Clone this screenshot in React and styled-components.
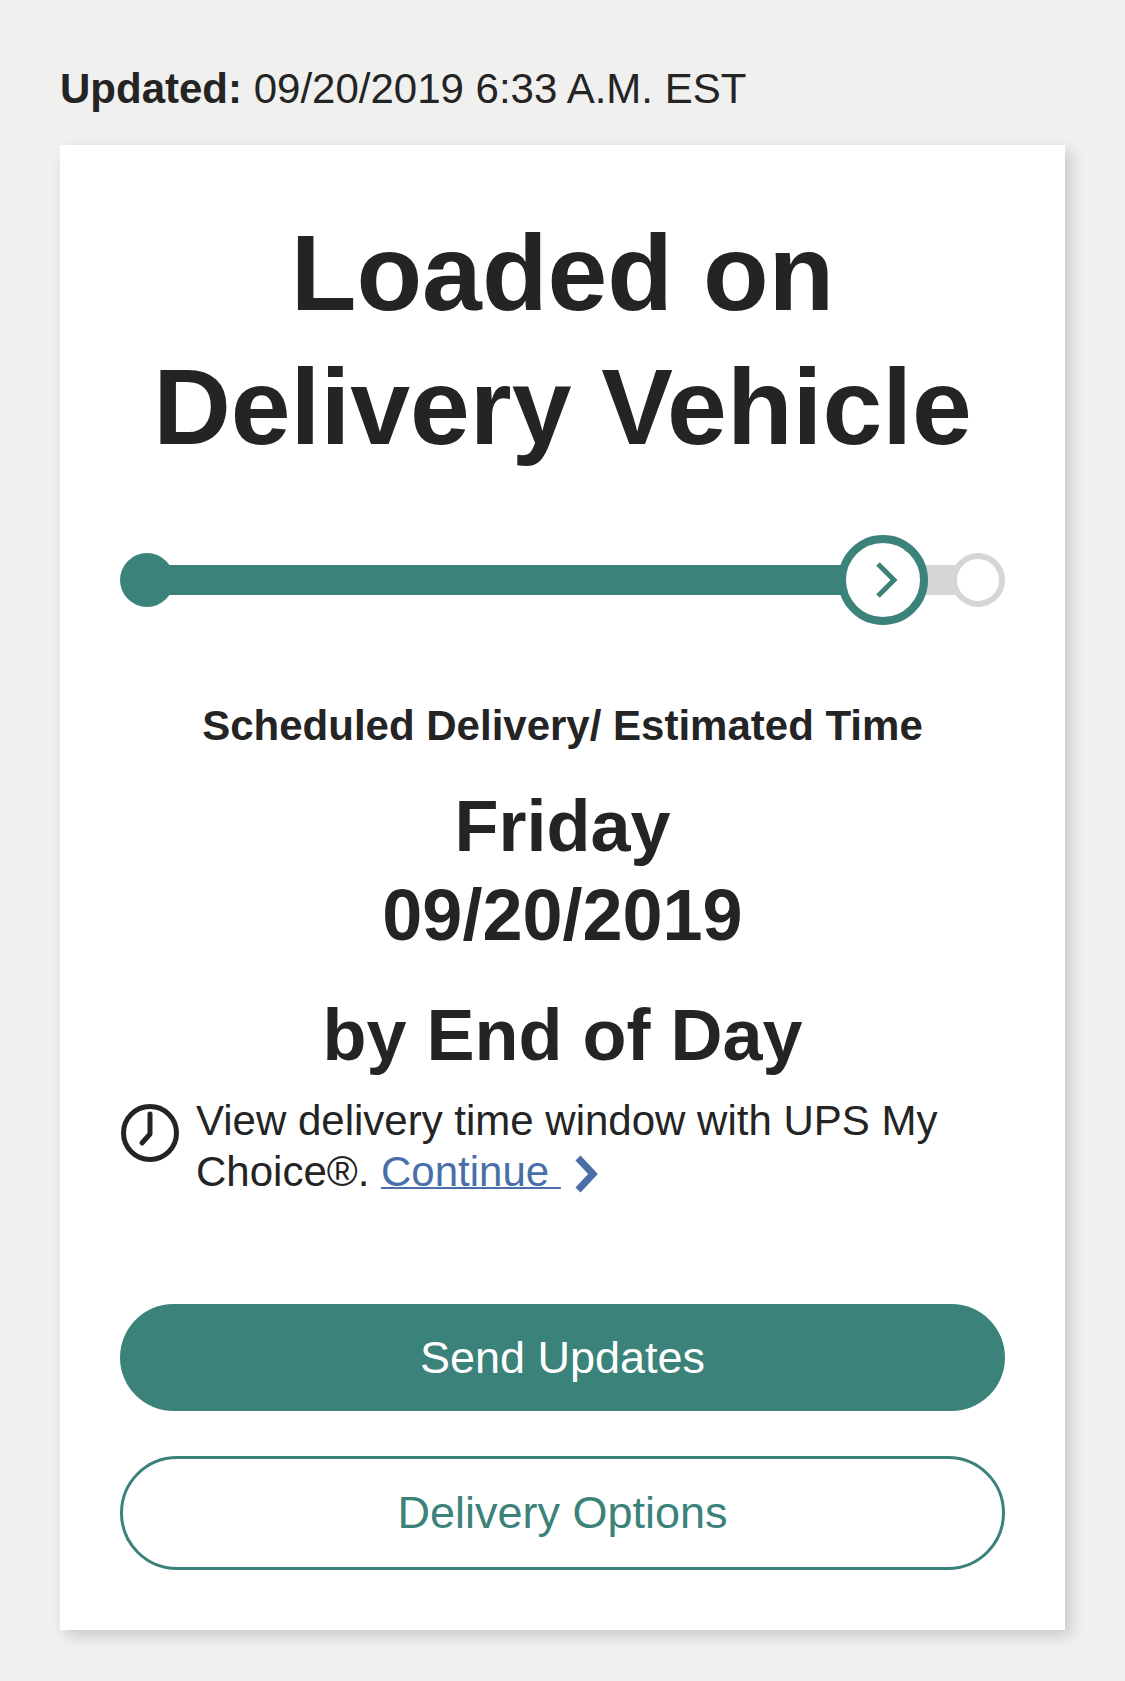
import React from 'react';
import styled, { createGlobalStyle } from 'styled-components';

const GlobalStyle = createGlobalStyle`
  html, body {
    margin: 0;
    padding: 0;
    background: #f0f0ef;
    font-family: "Liberation Sans", Arial, sans-serif;
    color: #242424;
  }
`;

const Page = styled.div`
  width: 1125px;
  height: 1681px;
  padding: 64px 60px 0;
  box-sizing: border-box;
  overflow: hidden;
`;

const Updated = styled.p`
  margin: 0 0 32px;
  font-size: 42px;
  line-height: 49px;
  white-space: nowrap;
  strong { font-weight: 700; }
`;

const Card = styled.section`
  width: 1005px;
  height: 1485px;
  box-sizing: border-box;
  padding: 61px 60px 0;
  background: #fff;
  box-shadow: 6px 6px 14px rgba(0, 0, 0, 0.16);
`;

const Title = styled.h1`
  margin: 0 0 61px;
  font-size: 107.5px;
  line-height: 134px;
  font-weight: 700;
  text-align: center;
`;

const Progress = styled.div`
  position: relative;
  height: 90px;
  display: flex;
  align-items: center;
  justify-content: space-between;
`;

const Track = styled.div`
  position: absolute;
  left: 27px;
  right: 27px;
  top: 30px;
  height: 30px;
  background: #d6d6d6;
`;

const TrackFill = styled.div`
  height: 100%;
  background: #3b827a;
`;

const StartDot = styled.span`
  position: relative;
  width: 54px;
  height: 54px;
  border-radius: 50%;
  background: #3b827a;
`;

const CurrentDot = styled.span`
  position: absolute;
  left: 718px;
  top: 0;
  width: 90px;
  height: 90px;
  box-sizing: border-box;
  border: 8px solid #3b827a;
  border-radius: 50%;
  background: #fff;
  display: flex;
  align-items: center;
  justify-content: center;
`;

const EndDot = styled.span`
  position: relative;
  width: 54px;
  height: 54px;
  box-sizing: border-box;
  border: 6px solid #d6d6d6;
  border-radius: 50%;
  background: #fff;
`;

const ScheduleLabel = styled.h2`
  margin: 76px 0 0;
  font-size: 42px;
  line-height: 50px;
  font-weight: 700;
  text-align: center;
`;

const DateBlock = styled.div`
  margin-top: 31px;
  font-size: 72px;
  line-height: 89px;
  font-weight: 700;
  text-align: center;
`;

const ByTime = styled.div`
  margin-top: 31px;
  font-size: 72px;
  line-height: 89px;
  font-weight: 700;
  text-align: center;
`;

const Notice = styled.div`
  display: flex;
  gap: 16px;
  margin-top: 15px;
`;

const ClockIcon = styled.svg`
  flex: none;
  width: 60px;
  height: 60px;
  margin-top: 8px;
`;

const NoticeText = styled.p`
  margin: 0;
  width: 760px;
  font-size: 42px;
  line-height: 51px;
`;

const ContinueLink = styled.a`
  color: #4a6fa8;
  text-decoration: underline;
  text-decoration-thickness: 2px;
  white-space: pre;
`;

const LinkArrow = styled.svg`
  width: 24px;
  height: 38px;
  margin-left: 14px;
  vertical-align: -7px;
`;

const PrimaryButton = styled.button`
  display: block;
  width: 100%;
  height: 107px;
  margin-top: 107px;
  border: 0;
  border-radius: 54px;
  background: #3b827a;
  color: #fff;
  font: 400 45px "Liberation Sans", Arial, sans-serif;
`;

const SecondaryButton = styled.button`
  display: block;
  width: 100%;
  height: 114px;
  margin-top: 45px;
  border: 3px solid #3b827a;
  border-radius: 57px;
  background: #fff;
  color: #3b827a;
  font: 400 45px "Liberation Sans", Arial, sans-serif;
`;

const App = () => (
  <Page>
    <GlobalStyle />
    <Updated>
      <strong>Updated:</strong> 09/20/2019 6:33 A.M. EST
    </Updated>
    <Card>
      <Title>
        Loaded on
        <br />
        Delivery Vehicle
      </Title>
      <Progress>
        <Track>
          <TrackFill style={{ width: '88%' }} />
        </Track>
        <StartDot />
        <CurrentDot>
          <svg width="32" height="36" viewBox="0 0 32 36" fill="none">
            <path d="M11 2 L27 18 L11 34" stroke="#3b827a" strokeWidth="5" />
          </svg>
        </CurrentDot>
        <EndDot />
      </Progress>
      <ScheduleLabel>Scheduled Delivery/ Estimated Time</ScheduleLabel>
      <DateBlock>
        Friday
        <br />
        09/20/2019
      </DateBlock>
      <ByTime>by End of Day</ByTime>
      <Notice>
        <ClockIcon viewBox="0 0 60 60" fill="none">
          <circle cx="30" cy="30" r="26.5" stroke="#242424" strokeWidth="5" />
          <path d="M30 11 V31 L22 40" stroke="#242424" strokeWidth="5" strokeLinecap="round" strokeLinejoin="round" />
        </ClockIcon>
        <NoticeText>
          View delivery time window with UPS My Choice®.{' '}
          <ContinueLink href="#">Continue </ContinueLink>
          <LinkArrow viewBox="0 0 24 38" fill="none">
            <path d="M3 3 L18 19 L3 35" stroke="#4a6fa8" strokeWidth="7" />
          </LinkArrow>
        </NoticeText>
      </Notice>
      <PrimaryButton>Send Updates</PrimaryButton>
      <SecondaryButton>Delivery Options</SecondaryButton>
    </Card>
  </Page>
);

export default App;
